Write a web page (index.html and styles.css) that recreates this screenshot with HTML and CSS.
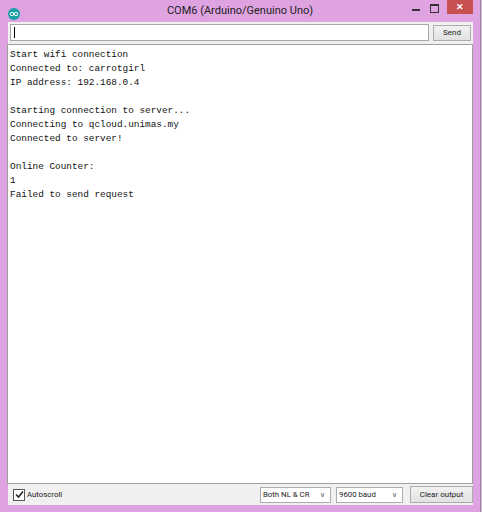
FILE: index.html
```html
<!DOCTYPE html>
<html>
<head>
  <meta charset="UTF-8">
  <title>COM6 (Arduino/Genuino Uno)</title>
  <link rel="stylesheet" href="styles.css">
</head>
<body>

  <div class="window">
    <div class="title-bar">
      <div class="app-icon">
        <svg width="12" height="12" viewBox="0 0 12 12">
          <circle cx="6" cy="6" r="6" fill="#17a1a5"/>
          <circle cx="4" cy="6" r="1.7" fill="none" stroke="#fff" stroke-width="1"/>
          <circle cx="8" cy="6" r="1.7" fill="none" stroke="#fff" stroke-width="1"/>
        </svg>
      </div>
      <div class="title">COM6 (Arduino/Genuino Uno)</div>
      <div class="controls">
        <span class="ctl-min"></span>
        <span class="ctl-max"></span>
        <span class="ctl-close">&#x2715;</span>
      </div>
    </div>

    <div class="client">
      <div class="send-row">
        <div class="send-input"><span class="caret"></span></div>
        <button class="btn send-btn">Send</button>
      </div>

      <div class="output">
        <div>Start wifi connection</div>
        <div>Connected to: carrotgirl</div>
        <div>IP address: 192.168.0.4</div>
        <div>&nbsp;</div>
        <div>Starting connection to server...</div>
        <div>Connecting to qcloud.unimas.my</div>
        <div>Connected to server!</div>
        <div>&nbsp;</div>
        <div>Online Counter:</div>
        <div>1</div>
        <div>Failed to send request</div>
      </div>

      <div class="status-bar">
        <label class="autoscroll">
          <span class="check">
            <svg width="9" height="9" viewBox="0 0 9 9"><path d="M1 4.5 L3.5 7 L8 1.5" fill="none" stroke="#222" stroke-width="1.6"/></svg>
          </span>
          Autoscroll
        </label>
        <div class="spacer"></div>
        <div class="select select-nl">Both NL &amp; CR<span class="arrow">&#x2228;</span></div>
        <div class="select select-baud">9600 baud<span class="arrow">&#x2228;</span></div>
        <button class="btn clear-btn">Clear output</button>
      </div>
    </div>
  </div>

</body>
</html>
```

FILE: styles.css
```css
body {
  margin: 0;
  padding: 0;
  background-color: #c9c4cc;
  font-family: Roboto, "Noto Sans", sans-serif;
}

.window {
  width: 481px;
  height: 512px;
  background-color: #dfa3e2;
  border-right: 1px solid #a07ea6;
  box-sizing: border-box;
  display: flex;
  flex-direction: column;
  padding: 0 7px 7px 8px;
}

.title-bar {
  height: 22px;
  display: grid;
  grid-template-columns: 1fr auto 1fr;
  align-items: start;
  margin: 0 -7px 0 -8px;
}

.app-icon {
  padding: 5px 0 0 8px;
  height: 12px;
}

.title {
  font-size: 11px;
  color: #222;
  padding-top: 4px;
}

.controls {
  display: flex;
  justify-content: flex-end;
  align-items: flex-start;
  padding-right: 7px;
}

.ctl-min {
  width: 8px;
  height: 2px;
  background: #333;
  margin: 9px 10px 0 0;
}

.ctl-max {
  width: 7px;
  height: 6px;
  border: 1px solid #333;
  border-top-width: 2px;
  margin: 4px 8px 0 0;
}

.ctl-close {
  width: 26px;
  height: 14px;
  background: #c75050;
  color: #fff;
  font-size: 9px;
  font-weight: bold;
  text-align: center;
  line-height: 14px;
}

.client {
  flex: 1;
  background: #f0f0f0;
  display: flex;
  flex-direction: column;
}

.send-row {
  display: flex;
  align-items: center;
  gap: 4px;
  padding: 2px 2px 3px 2px;
}

.send-input {
  flex: 1;
  height: 15px;
  background: #fff;
  border: 1px solid #a8a8a8;
  padding: 0 3px;
  display: flex;
  align-items: center;
}

.caret {
  width: 1px;
  height: 11px;
  background: #000;
}

.btn {
  font-family: Roboto, "Noto Sans", sans-serif;
  font-size: 8px;
  color: #222;
  background: linear-gradient(#f2f2f2, #e2e2e2);
  border: 1px solid #acacac;
  padding: 0;
  height: 16px;
}

.send-btn {
  width: 38px;
}

.output {
  flex: 1;
  background: #fff;
  border: 1px solid #a0a0a0;
  margin-left: -1px;
  padding: 3px 2px;
  font-family: "Liberation Mono", "Courier New", monospace;
  font-size: 9.4px;
  line-height: 14px;
  color: #111;
}

.status-bar {
  height: 21px;
  display: flex;
  align-items: center;
  gap: 5px;
  padding: 0 0 0 5px;
  font-size: 7.8px;
  color: #222;
}

.autoscroll {
  display: flex;
  align-items: center;
  gap: 2px;
}

.check {
  width: 10px;
  height: 10px;
  background: #fff;
  border: 1px solid #555;
  display: flex;
  align-items: center;
  justify-content: center;
}

.spacer {
  flex: 1;
}

.select {
  height: 14px;
  background: #fff;
  border: 1px solid #acacac;
  display: flex;
  align-items: center;
  justify-content: space-between;
  padding: 0 5px 0 2px;
  box-sizing: content-box;
}

.select-nl {
  width: 62px;
}

.select-baud {
  width: 58px;
}

.arrow {
  font-size: 7px;
  color: #555;
}

.clear-btn {
  width: 63px;
  height: 17px;
  margin-left: 2px;
}
```
